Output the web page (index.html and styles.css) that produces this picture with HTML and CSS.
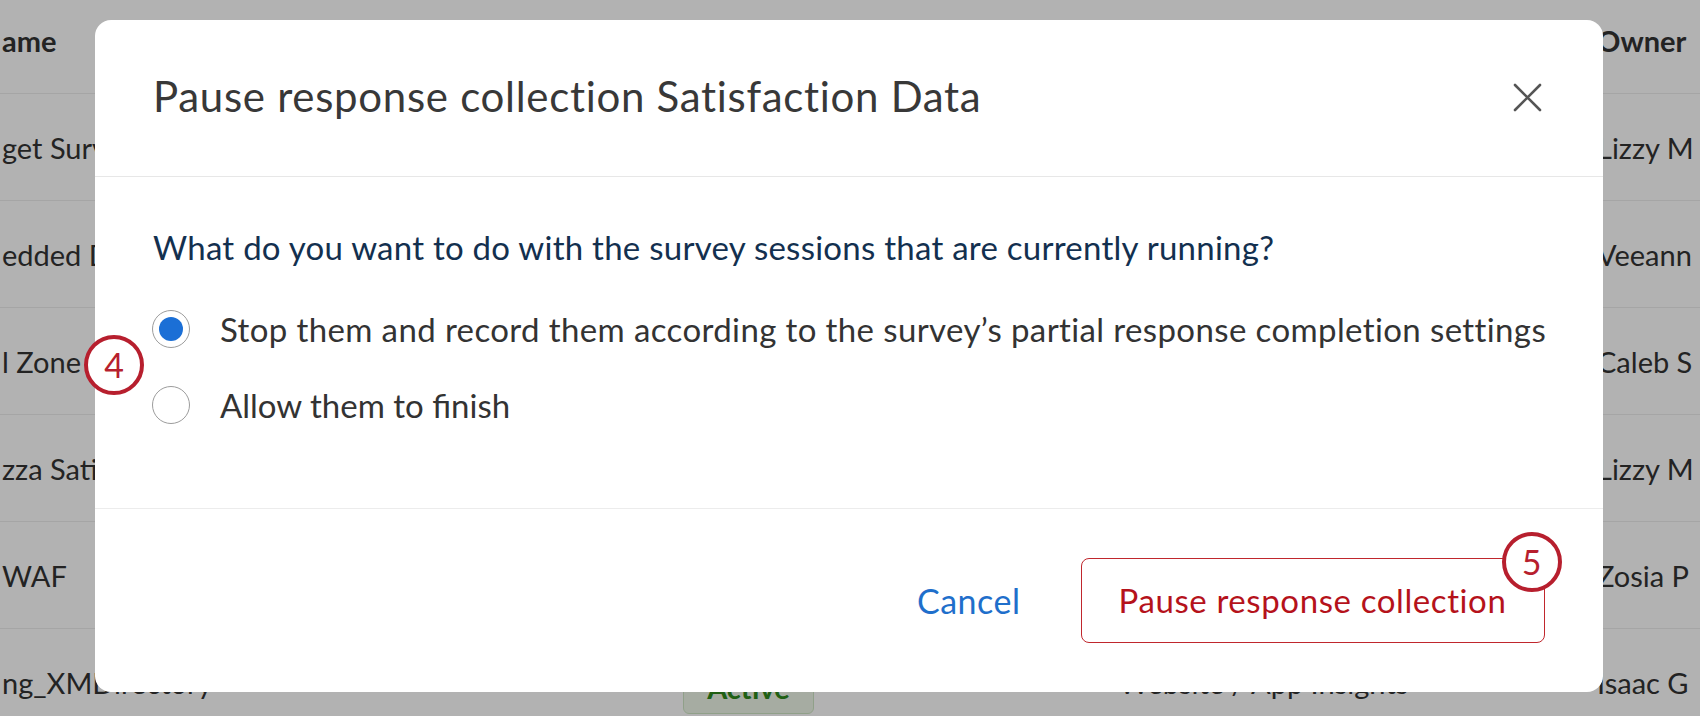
FILE: index.html
```html
<!DOCTYPE html>
<html lang="en">
<head>
<meta charset="utf-8">
<title>Pause response collection</title>
<link rel="stylesheet" href="styles.css">
</head>
<body>
<div class="page">
  <div class="table">
    <div class="row head">
      <div class="cell name">ame</div>
      <div class="cell status"></div>
      <div class="cell type"></div>
      <div class="cell owner">Owner</div>
    </div>
    <div class="row">
      <div class="cell name">get Survey</div>
      <div class="cell status"></div>
      <div class="cell type"></div>
      <div class="cell owner">Lizzy M</div>
    </div>
    <div class="row">
      <div class="cell name">edded Data</div>
      <div class="cell status"></div>
      <div class="cell type"></div>
      <div class="cell owner">Veeann</div>
    </div>
    <div class="row">
      <div class="cell name">l Zone</div>
      <div class="cell status"></div>
      <div class="cell type"></div>
      <div class="cell owner">Caleb S</div>
    </div>
    <div class="row">
      <div class="cell name">zza Satisfaction</div>
      <div class="cell status"></div>
      <div class="cell type"></div>
      <div class="cell owner">Lizzy M</div>
    </div>
    <div class="row">
      <div class="cell name">WAF</div>
      <div class="cell status"></div>
      <div class="cell type"></div>
      <div class="cell owner">Zosia P</div>
    </div>
    <div class="row">
      <div class="cell name">ng_XMDirectory</div>
      <div class="cell status"><span class="pill">Active</span></div>
      <div class="cell type">Website / App Insights</div>
      <div class="cell owner">Isaac G</div>
    </div>
  </div>
  <div class="overlay"></div>

  <div class="modal">
    <div class="modal-header">
      <h1 class="modal-title">Pause response collection Satisfaction Data</h1>
      <button class="close" aria-label="Close">
        <svg width="29" height="29" viewBox="0 0 29 29"><path d="M2 2 L27 27 M27 2 L2 27" stroke="#555" stroke-width="2.6" stroke-linecap="round" fill="none"/></svg>
      </button>
    </div>
    <div class="modal-body">
      <p class="question">What do you want to do with the survey sessions that are currently running?</p>
      <div class="options">
        <label class="option">
          <span class="radio checked"><span class="dot"></span></span>
          <span class="option-text">Stop them and record them according to the survey’s partial response completion settings</span>
        </label>
        <label class="option">
          <span class="radio"></span>
          <span class="option-text short">Allow them to finish</span>
        </label>
      </div>
    </div>
    <div class="modal-footer">
      <button class="cancel">Cancel</button>
      <div class="primary-wrap">
        <button class="primary">Pause response collection</button>
        <span class="badge badge-five">5</span>
      </div>
    </div>
    <span class="badge badge-four">4</span>
  </div>
</div>
</body>
</html>
```

FILE: styles.css
```css
* { box-sizing: border-box; }
html, body { margin: 0; padding: 0; }
body {
  width: 1700px;
  height: 716px;
  overflow: hidden;
  font-family: Lato, "Open Sans", "Liberation Sans", sans-serif;
  background: #fff;
}
.page {
  position: relative;
  width: 1700px;
  height: 716px;
  overflow: hidden;
}

/* background table */
.table {
  display: flex;
  flex-direction: column;
}
.row {
  display: grid;
  grid-template-columns: 683px 436px 474px 1fr;
  align-items: center;
  height: 107px;
  border-bottom: 1px solid #ececec;
  font-size: 29px;
  color: #333;
  white-space: nowrap;
}
.row.head {
  height: 94px;
  font-weight: 700;
  padding-bottom: 12px;
}
.cell { overflow: hidden; }
.cell.name { padding-left: 2px; }
.cell.owner { padding-left: 4px; }
.pill {
  display: inline-flex;
  align-items: center;
  justify-content: center;
  width: 131px;
  height: 54px;
  margin-top: 10px;
  border: 1px solid #cfe6c4;
  border-radius: 6px;
  background: #eef7e9;
  color: #2f8a1c;
  font-weight: 700;
}
.overlay {
  position: absolute;
  inset: 0;
  background: rgba(0, 0, 0, 0.3);
}

/* modal */
.modal {
  position: absolute;
  left: 95px;
  top: 19.5px;
  width: 1507.5px;
  height: 672px;
  background: #fff;
  border-radius: 16px;
  display: flex;
  flex-direction: column;
}
.modal-header {
  height: 157px;
  flex: none;
  display: flex;
  align-items: center;
  justify-content: space-between;
  padding: 0 61px 0 58px;
  border-bottom: 1.5px solid #e7e7e7;
}
.modal-title {
  margin: 0 0 4px 0;
  font-size: 42px;
  font-weight: 400;
  color: #383838;
  letter-spacing: 0.7px;
}
.close {
  width: 29px;
  height: 29px;
  padding: 0;
  border: 0;
  background: none;
  display: flex;
}
.modal-body {
  flex: 1;
  padding: 50px 58px 0 57px;
}
.question {
  margin: 0 0 43px 1px;
  font-size: 33px;
  line-height: 40px;
  letter-spacing: 0.25px;
  color: #13304f;
}
.options {
  display: flex;
  flex-direction: column;
  gap: 38px;
}
.option {
  display: flex;
  align-items: center;
  gap: 30px;
  height: 38px;
}
.radio {
  width: 38px;
  height: 38px;
  flex: none;
  border: 1.5px solid #9c9c9c;
  border-radius: 50%;
  display: flex;
  align-items: center;
  justify-content: center;
}
.dot {
  width: 24px;
  height: 24px;
  border-radius: 50%;
  background: #1b6fd6;
}
.option-text {
  font-size: 33px;
  letter-spacing: 0.38px;
  color: #333;
  white-space: nowrap;
}
.option-text.short {
  letter-spacing: 0;
}
.modal-footer {
  height: 184px;
  flex: none;
  border-top: 1.5px solid #ececec;
  display: flex;
  align-items: center;
  justify-content: flex-end;
  gap: 60px;
  padding: 0 58px 0 58px;
}
.cancel {
  border: 0;
  background: none;
  padding: 0;
  font-family: inherit;
  font-size: 34px;
  letter-spacing: 0.5px;
  color: #1f6fcb;
}
.primary-wrap {
  position: relative;
}
.primary {
  width: 464px;
  height: 85px;
  border: 1.5px solid #c0272d;
  border-radius: 8px;
  background: #fff;
  font-family: inherit;
  font-size: 33px;
  letter-spacing: 0.6px;
  color: #b5121b;
  padding: 0;
}
.badge {
  position: absolute;
  width: 60px;
  height: 60px;
  border: 4.5px solid #b71f2e;
  border-radius: 50%;
  background: #fff;
  color: #b71f2e;
  font-size: 34px;
  display: flex;
  align-items: center;
  justify-content: center;
  line-height: 1;
}
.badge-five {
  right: -17px;
  top: -26px;
}
.badge-four {
  left: -11px;
  top: 315px;
}
```
